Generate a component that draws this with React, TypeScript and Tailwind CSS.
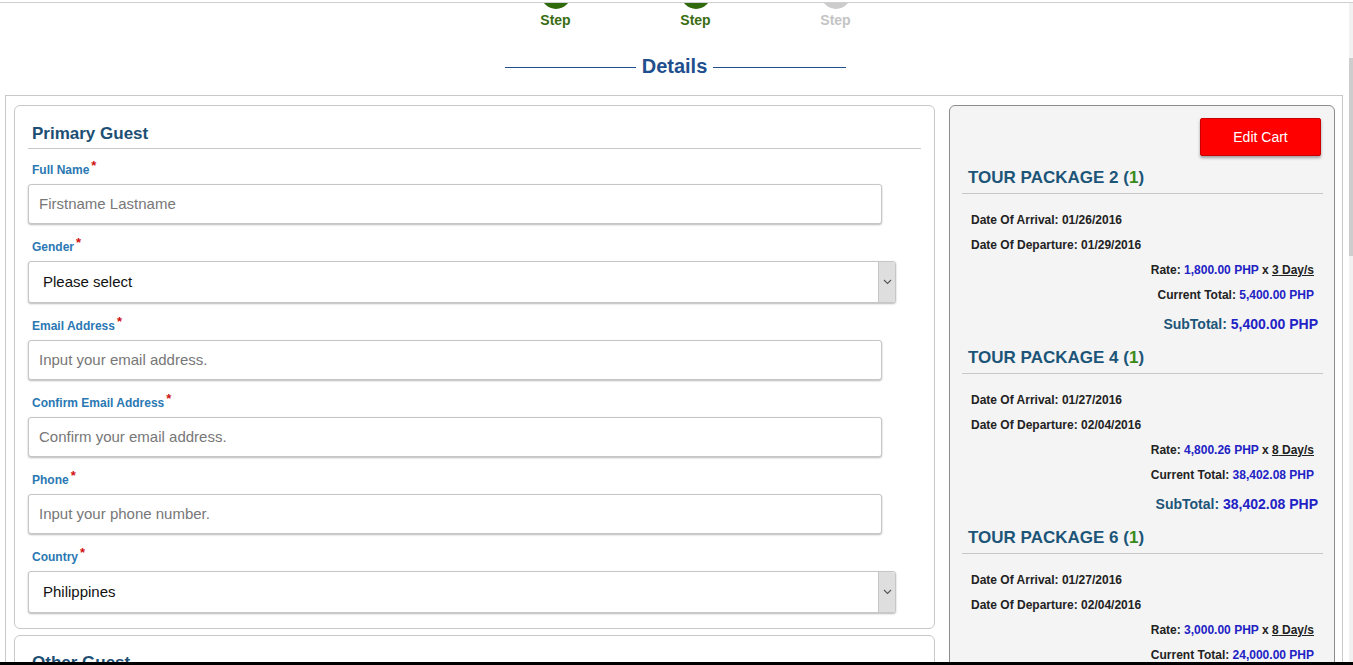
import React from "react"

// step indicator
const steps = [
  { label: "Step", done: true },
  { label: "Step", done: true },
  { label: "Step", done: false },
]

const fields = [
  { label: "Full Name", kind: "input", placeholder: "Firstname Lastname" },
  { label: "Gender", kind: "select", value: "Please select" },
  { label: "Email Address", kind: "input", placeholder: "Input your email address." },
  { label: "Confirm Email Address", kind: "input", placeholder: "Confirm your email address." },
  { label: "Phone", kind: "input", placeholder: "Input your phone number." },
  { label: "Country", kind: "select", value: "Philippines" },
]

const packages = [
  {
    name: "TOUR PACKAGE 2",
    qty: 1,
    arrival: "01/26/2016",
    departure: "01/29/2016",
    rate: "1,800.00",
    days: 3,
    total: "5,400.00",
  },
  {
    name: "TOUR PACKAGE 4",
    qty: 1,
    arrival: "01/27/2016",
    departure: "02/04/2016",
    rate: "4,800.26",
    days: 8,
    total: "38,402.08",
  },
  {
    name: "TOUR PACKAGE 6",
    qty: 1,
    arrival: "01/27/2016",
    departure: "02/04/2016",
    rate: "3,000.00",
    days: 8,
    total: "24,000.00",
  },
]

function Chevron() {
  return (
    <svg width="9" height="6" viewBox="0 0 9 6" fill="none">
      <path d="M1 1l3.5 3.5L8 1" stroke="#555" strokeWidth="1.1" />
    </svg>
  )
}

function Field({ f }: { f: (typeof fields)[number] }) {
  return (
    <div className="mb-[15px]">
      <div className="pl-[4px] h-[14px] leading-[16px] text-[12px] font-bold text-[#2a78b3]">
        {f.label}
        <span className="relative -top-[4px] ml-[2px] text-[13px] text-[#d01010]">*</span>
      </div>
      {f.kind === "input" ? (
        <div className="mt-[8px] w-[854px] h-[40px] flex items-center px-[10px] rounded-[3px] border border-[#c6c6c6] bg-white shadow-[0_1px_2px_rgba(0,0,0,0.28)] text-[15px] text-[#777]">
          {f.placeholder}
        </div>
      ) : (
        <div className="mt-[8px] w-[868px] h-[42px] flex rounded-[3px] border border-[#c6c6c6] bg-white shadow-[0_1px_2px_rgba(0,0,0,0.28)]">
          <div className="flex-1 flex items-center pl-[14px] text-[15px] text-[#111]">{f.value}</div>
          <div className="w-[17px] flex items-center justify-center bg-[#dedede] border-l border-[#c6c6c6] rounded-r-[3px]">
            <Chevron />
          </div>
        </div>
      )}
    </div>
  )
}

function Package({ p, first }: { p: (typeof packages)[number]; first: boolean }) {
  return (
    <div className={first ? "mt-[12px]" : "mt-[16px]"}>
      <div className="border-b border-[#c8c8c8] pb-[5px] pl-[6px] h-[26px] leading-[20px] text-[17px] font-bold text-[#1d5579]">
        {p.name} (<span className="text-[#3b8a17]">{p.qty}</span>)
      </div>
      <div className="pl-[9px] pr-[9px] text-[12px] font-bold text-[#222]">
        <div className="mt-[19px] h-[14px] leading-[14px]">Date Of Arrival: {p.arrival}</div>
        <div className="mt-[11px] h-[14px] leading-[14px]">Date Of Departure: {p.departure}</div>
        <div className="mt-[11px] h-[14px] leading-[14px] text-right">
          Rate: <span className="text-[#2222c4]">{p.rate} PHP</span> x{" "}
          <span className="underline">{p.days} Day/s</span>
        </div>
        <div className="mt-[11px] h-[14px] leading-[14px] text-right">
          Current Total: <span className="text-[#2222c4]">{p.total} PHP</span>
        </div>
      </div>
      <div className="mt-[14px] pr-[5px] h-[16px] leading-[16px] text-right text-[14px] font-bold text-[#1d5579]">
        SubTotal: <span className="text-[#2222c4]">{p.total} PHP</span>
      </div>
    </div>
  )
}

export default function App() {
  return (
    <div className="h-[665px] w-full overflow-hidden flex flex-col bg-white font-['Liberation_Sans',Arial,sans-serif]">
      <div className="flex-1 min-h-0 flex">
        <div className="flex-1 min-w-0 overflow-hidden">
          <div className="h-[2px]" />
          <div className="border-t border-[#cfcfcf]" />
          {/* steps */}
          <div className="overflow-hidden h-[25px] flex justify-center pl-[42px]">
            {steps.map((s, i) => (
              <div key={i} className="w-[140px] flex flex-col items-center">
                <div
                  className={
                    "w-[30px] h-[30px] shrink-0 rounded-full -mt-[24px] " +
                    (s.done ? "bg-[#2f6b0c]" : "bg-[#cccccc]")
                  }
                />
                <div
                  className={
                    "mt-[3px] h-[16px] leading-[16px] text-[14px] font-bold " +
                    (s.done ? "text-[#3a6d12]" : "text-[#c4c4c4]")
                  }
                >
                  {s.label}
                </div>
              </div>
            ))}
          </div>
          {/* heading */}
          <div className="mt-[26px] h-[24px] flex items-center justify-center gap-[6px] pl-[2px]">
            <div className="w-[131px] h-[1px] bg-[#1f4f8d] mt-[2px]" />
            <div className="text-[20px] leading-[24px] font-bold text-[#1f4f8d]">Details</div>
            <div className="w-[133px] h-[1px] bg-[#1f4f8d] mt-[2px]" />
          </div>
          {/* outer box */}
          <div className="mt-[17px] ml-[5px] mr-[6px] border border-[#c8c8c8] pt-[9px] pl-[8px] pr-[8px] flex gap-[14px] items-start">
            <div className="w-[921px] shrink-0">
              <div className="border border-[#c8c8c8] rounded-[6px] px-[13px] pt-[17px]">
                <div className="border-b border-[#c8c8c8] pl-[4px] h-[26px] leading-[22px] text-[17px] font-bold text-[#1d4f74]">
                  Primary Guest
                </div>
                <div className="mt-[13px]">
                  {fields.map((f) => (
                    <Field key={f.label} f={f} />
                  ))}
                </div>
              </div>
              <div className="mt-[6px] border border-[#c8c8c8] rounded-[6px] px-[13px] pt-[17px] h-[80px]">
                <div className="pl-[4px] h-[20px] leading-[20px] text-[17px] font-bold text-[#1d4f74]">Other Guest</div>
              </div>
            </div>
            <div className="w-[386px] shrink-0 border border-[#8c8c8c] rounded-[6px] bg-[#f4f4f4] pt-[12px] pl-[12px] pr-[11px] pb-[20px]">
              <div className="flex justify-end pr-[2px]">
                <div className="w-[121px] h-[38px] flex items-center justify-center bg-[#ff0000] border border-[#cc0000] rounded-[2px] shadow-[0_2px_3px_rgba(0,0,0,0.35)] text-[14px] text-white">
                  Edit Cart
                </div>
              </div>
              {packages.map((p, i) => (
                <Package key={p.name} p={p} first={i === 0} />
              ))}
            </div>
          </div>
        </div>
        <div className="w-[4px] shrink-0 bg-[#f1f1f1] border-t border-[#cfcfcf] mt-[2px]">
          <div className="mt-[55px] h-[198px] bg-[#cdcdcd]" />
        </div>
      </div>
      <div className="h-[3px] bg-black" />
    </div>
  )
}
